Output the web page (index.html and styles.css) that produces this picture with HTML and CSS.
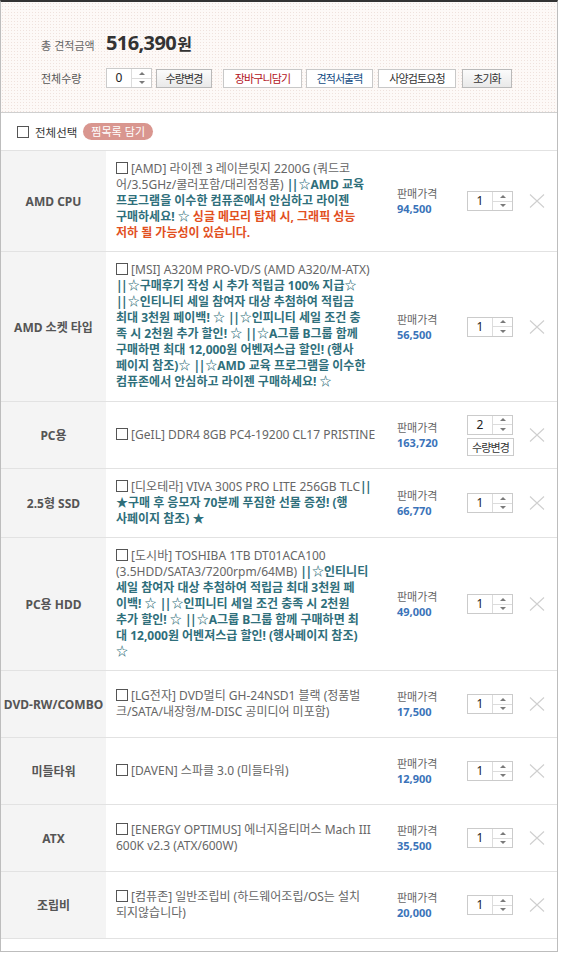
FILE: index.html
```html
<!DOCTYPE html>
<html lang="ko">
<head>
<meta charset="utf-8">
<title>견적</title>
<link rel="stylesheet" href="styles.css">
</head>
<body>
<div class="wrap">
  <div class="summary">
    <div class="total">
      <span class="total-label">총 견적금액</span>
      <span class="total-num">516,390</span><span class="total-won">원</span>
    </div>
    <div class="controls">
      <span class="ctl-label">전체수량</span>
      <div class="spin spin-head"><span class="val">0</span><span class="arrows"><i class="up"></i><i class="down"></i></span></div>
      <button class="btn btn-gray b-qty">수량변경</button>
      <button class="btn btn-red b-cart">장바구니담기</button>
      <button class="btn btn-blue b-print">견적서출력</button>
      <button class="btn b-review">사양검토요청</button>
      <button class="btn btn-gray b-reset">초기화</button>
    </div>
  </div>

  <div class="selectall">
    <span class="cb"></span>
    <span class="sa-label">전체선택</span>
    <span class="badge">찜목록 담기</span>
  </div>

  <div class="list">
    <div class="row">
      <div class="cat">AMD CPU</div>
      <div class="prod"><p><span class="cb"></span> [AMD] 라이젠 3 레이븐릿지 2200G (쿼드코<br>어/3.5GHz/쿨러포함/대리점정품) <b class="t"><span class="pp">||</span>☆AMD 교육<br>프로그램을 이수한 컴퓨존에서 안심하고 라이젠<br>구매하세요! ☆</b> <b class="r">싱글 메모리 탑재 시, 그래픽 성능<br>저하 될 가능성이 있습니다.</b></p></div>
      <div class="price"><span class="pl">판매가격</span><span class="pv">94,500</span></div>
      <div class="qty"><div class="spin"><span class="val">1</span><span class="arrows"><i class="up"></i><i class="down"></i></span></div></div>
      <div class="del"><svg width="16" height="14" viewBox="0 0 16 14"><path d="M1 0.5L15 13.5M15 0.5L1 13.5" stroke="#cfcfcf" stroke-width="1.1" fill="none"/></svg></div>
    </div>

    <div class="row row-tall">
      <div class="cat">AMD 소켓 타입</div>
      <div class="prod"><p><span class="cb"></span> [MSI] A320M PRO-VD/S (AMD A320/M-ATX)<br><b class="t"><span class="pp">||</span>☆구매후기 작성 시 추가 적립금 100% 지급☆<br><span class="pp">||</span>☆인티니티 세일 참여자 대상 추첨하여 적립금<br>최대 3천원 페이백! ☆ <span class="pp">||</span>☆인피니티 세일 조건 충<br>족 시 2천원 추가 할인! ☆ <span class="pp">||</span>☆A그룹 B그룹 함께<br>구매하면 최대 12,000원 어벤져스급 할인! (행사<br>페이지 참조)☆ <span class="pp">||</span>☆AMD 교육 프로그램을 이수한<br>컴퓨존에서 안심하고 라이젠 구매하세요! ☆</b></p></div>
      <div class="price"><span class="pl">판매가격</span><span class="pv">56,500</span></div>
      <div class="qty"><div class="spin"><span class="val">1</span><span class="arrows"><i class="up"></i><i class="down"></i></span></div></div>
      <div class="del"><svg width="16" height="14" viewBox="0 0 16 14"><path d="M1 0.5L15 13.5M15 0.5L1 13.5" stroke="#cfcfcf" stroke-width="1.1" fill="none"/></svg></div>
    </div>

    <div class="row">
      <div class="cat">PC용</div>
      <div class="prod"><p><span class="cb"></span> [GeIL] DDR4 8GB PC4-19200 CL17 PRISTINE</p></div>
      <div class="price"><span class="pl">판매가격</span><span class="pv">163,720</span></div>
      <div class="qty"><div class="spin"><span class="val">2</span><span class="arrows"><i class="up"></i><i class="down"></i></span></div><button class="qbtn">수량변경</button></div>
      <div class="del"><svg width="16" height="14" viewBox="0 0 16 14"><path d="M1 0.5L15 13.5M15 0.5L1 13.5" stroke="#cfcfcf" stroke-width="1.1" fill="none"/></svg></div>
    </div>

    <div class="row">
      <div class="cat">2.5형 SSD</div>
      <div class="prod"><p><span class="cb"></span> [디오테라] VIVA 300S PRO LITE 256GB TLC<b class="t"><span class="pp">||</span><br>★구매 후 응모자 70분께 푸짐한 선물 증정! (행<br>사페이지 참조) ★</b></p></div>
      <div class="price"><span class="pl">판매가격</span><span class="pv">66,770</span></div>
      <div class="qty"><div class="spin"><span class="val">1</span><span class="arrows"><i class="up"></i><i class="down"></i></span></div></div>
      <div class="del"><svg width="16" height="14" viewBox="0 0 16 14"><path d="M1 0.5L15 13.5M15 0.5L1 13.5" stroke="#cfcfcf" stroke-width="1.1" fill="none"/></svg></div>
    </div>

    <div class="row">
      <div class="cat">PC용 HDD</div>
      <div class="prod"><p><span class="cb"></span> [도시바] TOSHIBA 1TB DT01ACA100<br>(3.5HDD/SATA3/7200rpm/64MB) <b class="t"><span class="pp">||</span>☆인티니티<br>세일 참여자 대상 추첨하여 적립금 최대 3천원 페<br>이백! ☆ <span class="pp">||</span>☆인피니티 세일 조건 충족 시 2천원<br>추가 할인! ☆ <span class="pp">||</span>☆A그룹 B그룹 함께 구매하면 최<br>대 12,000원 어벤져스급 할인! (행사페이지 참조)<br>☆</b></p></div>
      <div class="price"><span class="pl">판매가격</span><span class="pv">49,000</span></div>
      <div class="qty"><div class="spin"><span class="val">1</span><span class="arrows"><i class="up"></i><i class="down"></i></span></div></div>
      <div class="del"><svg width="16" height="14" viewBox="0 0 16 14"><path d="M1 0.5L15 13.5M15 0.5L1 13.5" stroke="#cfcfcf" stroke-width="1.1" fill="none"/></svg></div>
    </div>

    <div class="row">
      <div class="cat">DVD-RW/COMBO</div>
      <div class="prod"><p><span class="cb"></span> [LG전자] DVD멀티 GH-24NSD1 블랙 (정품벌<br>크/SATA/내장형/M-DISC 공미디어 미포함)</p></div>
      <div class="price"><span class="pl">판매가격</span><span class="pv">17,500</span></div>
      <div class="qty"><div class="spin"><span class="val">1</span><span class="arrows"><i class="up"></i><i class="down"></i></span></div></div>
      <div class="del"><svg width="16" height="14" viewBox="0 0 16 14"><path d="M1 0.5L15 13.5M15 0.5L1 13.5" stroke="#cfcfcf" stroke-width="1.1" fill="none"/></svg></div>
    </div>

    <div class="row">
      <div class="cat">미들타워</div>
      <div class="prod"><p><span class="cb"></span> [DAVEN] 스파클 3.0 (미들타워)</p></div>
      <div class="price"><span class="pl">판매가격</span><span class="pv">12,900</span></div>
      <div class="qty"><div class="spin"><span class="val">1</span><span class="arrows"><i class="up"></i><i class="down"></i></span></div></div>
      <div class="del"><svg width="16" height="14" viewBox="0 0 16 14"><path d="M1 0.5L15 13.5M15 0.5L1 13.5" stroke="#cfcfcf" stroke-width="1.1" fill="none"/></svg></div>
    </div>

    <div class="row">
      <div class="cat">ATX</div>
      <div class="prod"><p><span class="cb"></span> [ENERGY OPTIMUS] 에너지옵티머스 Mach III<br>600K v2.3 (ATX/600W)</p></div>
      <div class="price"><span class="pl">판매가격</span><span class="pv">35,500</span></div>
      <div class="qty"><div class="spin"><span class="val">1</span><span class="arrows"><i class="up"></i><i class="down"></i></span></div></div>
      <div class="del"><svg width="16" height="14" viewBox="0 0 16 14"><path d="M1 0.5L15 13.5M15 0.5L1 13.5" stroke="#cfcfcf" stroke-width="1.1" fill="none"/></svg></div>
    </div>

    <div class="row">
      <div class="cat">조립비</div>
      <div class="prod"><p><span class="cb"></span> [컴퓨존] 일반조립비 (하드웨어조립/OS는 설치<br>되지않습니다)</p></div>
      <div class="price"><span class="pl">판매가격</span><span class="pv">20,000</span></div>
      <div class="qty"><div class="spin"><span class="val">1</span><span class="arrows"><i class="up"></i><i class="down"></i></span></div></div>
      <div class="del"><svg width="16" height="14" viewBox="0 0 16 14"><path d="M1 0.5L15 13.5M15 0.5L1 13.5" stroke="#cfcfcf" stroke-width="1.1" fill="none"/></svg></div>
    </div>
  </div>
</div>
</body>
</html>
```

FILE: styles.css
```css
* { box-sizing: border-box; }

body {
  margin: 0;
  background: #fff;
  color: #555;
  font-family: "Noto Sans", "Noto Sans CJK KR", sans-serif;
}

.wrap {
  width: 558px;
  border: 1px solid #bdbdbd;
  border-top: 2px solid #333;
  padding-bottom: 12px;
}

/* ---------- summary ---------- */
.summary {
  height: 111px;
  padding: 28px 0 0 40px;
  border-bottom: 1px solid #cfcfcf;
  background-color: #fdf9f7;
  background-image: radial-gradient(circle, #efe2dd 0.7px, transparent 1px);
  background-size: 3px 3px;
}

.total {
  display: flex;
  align-items: baseline;
  height: 26px;
  line-height: 26px;
}

.total-label {
  font-family: "Noto Sans CJK KR", sans-serif;
  font-size: 11px;
  color: #666;
  width: 65px;
}

.total-num {
  font-size: 20px;
  font-weight: 700;
  color: #333;
  letter-spacing: -0.6px;
}

.total-won {
  font-family: "Noto Sans CJK KR", sans-serif;
  font-size: 16px;
  font-weight: 700;
  color: #333;
  margin-left: 1px;
}

.controls {
  display: flex;
  align-items: center;
  margin-top: 12px;
  height: 20px;
}

.ctl-label {
  font-family: "Noto Sans CJK KR", sans-serif;
  font-size: 11px;
  color: #555;
  width: 65px;
}

.btn {
  height: 19px;
  padding: 0;
  border: 1px solid #c8c8c8;
  background: #fff;
  font-family: "Noto Sans CJK KR", sans-serif;
  font-size: 11px;
  letter-spacing: -0.9px;
  line-height: 17px;
  color: #333;
  cursor: pointer;
}

.btn-gray {
  background: linear-gradient(#fbfbfb, #e9e9e9);
  border-color: #b9b9b9;
}

.btn-red { color: #b2131b; }
.btn-blue { color: #134b83; }

.b-qty { width: 56px; margin-left: 4px; }
.b-cart { width: 79px; margin-left: 11px; }
.b-print { width: 67px; margin-left: 4px; }
.b-review { width: 78px; margin-left: 5px; }
.b-reset { width: 50px; margin-left: 6px; }

/* ---------- spinner ---------- */
.spin {
  display: flex;
  width: 46px;
  height: 20px;
  border: 1px solid #cbcbcb;
  background: #fff;
}

.spin .val {
  flex: 1;
  text-align: center;
  font-size: 12px;
  line-height: 18px;
  color: #222;
}

.spin .arrows {
  width: 20px;
  border-left: 1px solid #dcdcdc;
  display: flex;
  flex-direction: column;
}

.spin .arrows i {
  flex: 1;
  display: flex;
  align-items: center;
  justify-content: center;
}

.spin .arrows i.up { border-bottom: 1px solid #dcdcdc; }

.spin .arrows i::before {
  content: "";
  width: 0;
  height: 0;
  border-left: 3px solid transparent;
  border-right: 3px solid transparent;
}

.spin .arrows i.up::before { border-bottom: 3px solid #7a7a7a; }
.spin .arrows i.down::before { border-top: 3px solid #7a7a7a; }

/* ---------- select all ---------- */
.selectall {
  height: 37px;
  display: flex;
  align-items: center;
  padding-left: 16px;
}

.cb {
  display: inline-block;
  width: 12px;
  height: 12px;
  border: 1px solid #555;
  background: #fff;
  vertical-align: -1px;
}

.sa-label {
  font-family: "Noto Sans CJK KR", sans-serif;
  font-size: 11.5px;
  color: #333;
  margin-left: 6px;
}

.badge {
  margin-left: 6px;
  height: 17px;
  line-height: 17px;
  padding: 0 8px;
  border-radius: 9px;
  background: #d9968f;
  color: #fff;
  font-family: "Noto Sans CJK KR", sans-serif;
  font-size: 11px;
}

/* ---------- list ---------- */
.list {
  border-bottom: 1px solid #e2e2e2;
}

.row {
  display: grid;
  grid-template-columns: 105px 281px 70px 63px 37px;
  min-height: 67px;
  border-top: 1px solid #e2e2e2;
}

.cat {
  background: #f4f4f4;
  display: flex;
  align-items: center;
  justify-content: center;
  font-size: 12px;
  font-weight: 700;
  color: #555;
}

.prod {
  display: flex;
  align-items: center;
  padding: 10px 0 10px 10px;
}

.row-tall .prod { padding-bottom: 11px; }

.prod p {
  margin: 0;
  font-size: 12px;
  line-height: 16px;
  color: #666;
  white-space: nowrap;
}

.prod b { font-weight: 700; }
.prod .t { color: #2f6f7b; }
.prod .r { color: #e2501f; }
.prod .pp { letter-spacing: -1.5px; margin-right: 1.5px; }

.price {
  display: flex;
  flex-direction: column;
  justify-content: center;
  padding-left: 10px;
  line-height: 16px;
}

.pl {
  font-family: "Noto Sans CJK KR", sans-serif;
  font-size: 11px;
  color: #666;
}

.pv {
  font-size: 11px;
  font-weight: 700;
  color: #3a73b9;
}

.qty {
  display: flex;
  flex-direction: column;
  justify-content: center;
  padding-left: 10px;
}

.qbtn {
  margin-top: 3px;
  width: 47px;
  height: 18px;
  padding: 0;
  border: 1px solid #cbcbcb;
  background: #fff;
  font-family: "Noto Sans CJK KR", sans-serif;
  font-size: 11px;
  letter-spacing: -0.9px;
  line-height: 16px;
  color: #333;
}

.del {
  display: flex;
  align-items: center;
  padding-left: 9px;
}

.del svg { display: block; }
```
